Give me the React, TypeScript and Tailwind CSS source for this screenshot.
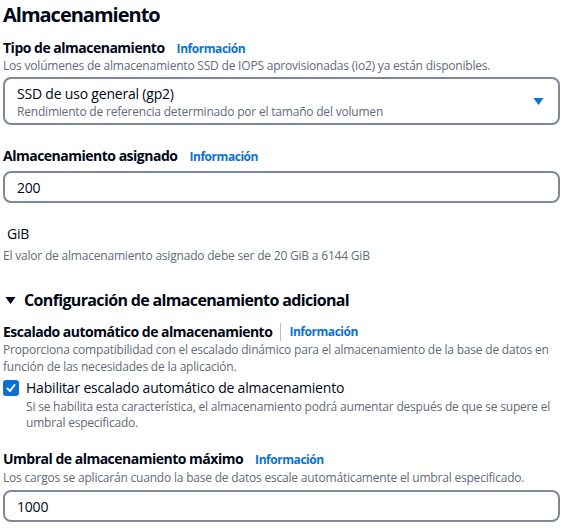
import React from 'react';

const font = { fontFamily: '"Open Sans", "Noto Sans", sans-serif' };

function Info() {
  return <span className="text-[12px] font-bold text-[#0972d3] ml-[12px] tracking-[-0.45px]">Información</span>;
}

export default function App() {
  return (
    <div className="w-[577px] h-[532px] bg-white text-[#000716] px-[3px] overflow-hidden tracking-[-0.2px]" style={font}>
      <h1 className="text-[20px] font-bold leading-[28px] mt-[1px] tracking-[-1px]">Almacenamiento</h1>

      {/* Tipo de almacenamiento */}
      <div className="mt-[10px]">
        <div className="flex items-baseline leading-[18px]">
          <span className="text-[14px] font-bold tracking-[-0.5px]">Tipo de almacenamiento</span>
          <Info />
        </div>
        <p className="text-[12px] leading-[16px] text-[#5f6b7a]">
          Los volúmenes de almacenamiento SSD de IOPS aprovisionadas (io2) ya están disponibles.
        </p>
        <div className="mt-[3px] w-[557px] h-[48px] border-2 border-[#7d8998] rounded-[8px] flex items-center justify-between pl-[12px] pr-[14px]">
          <div className="flex flex-col pt-[3px]">
            <span className="text-[14px] leading-[18px]">SSD de uso general (gp2)</span>
            <span className="text-[12px] leading-[17px] text-[#5f6b7a]">
              Rendimiento de referencia determinado por el tamaño del volumen
            </span>
          </div>
          <svg width="11" height="9" viewBox="0 0 11 9">
            <path d="M0.5 1 L10.5 1 L5.5 8 Z" fill="#0972d3" />
          </svg>
        </div>
      </div>

      {/* Almacenamiento asignado */}
      <div className="mt-[22px]">
        <div className="flex items-baseline leading-[18px]">
          <span className="text-[14px] font-bold tracking-[-0.5px]">Almacenamiento asignado</span>
          <Info />
        </div>
        <div className="mt-[5px] w-[557px] h-[32px] border-2 border-[#7d8998] rounded-[8px] flex items-center pl-[12px]">
          <span className="text-[14px]">200</span>
        </div>
        <div className="mt-[22px] pl-[4px] text-[14px] leading-[18px]">GiB</div>
        <p className="mt-[5px] text-[12px] leading-[16px] text-[#5f6b7a]">
          El valor de almacenamiento asignado debe ser de 20 GiB a 6144 GiB
        </p>
      </div>

      {/* Configuración adicional */}
      <div className="mt-[25px] flex items-center gap-[8px]">
        <svg width="11" height="9" viewBox="0 0 11 9" className="ml-[2px]">
          <path d="M0.5 1 L10.5 1 L5.5 8 Z" fill="#000716" />
        </svg>
        <span className="text-[16px] font-bold leading-[22px] tracking-[-0.65px]">Configuración de almacenamiento adicional</span>
      </div>

      <div className="mt-[12px]">
        <div className="flex items-center leading-[18px]">
          <span className="text-[14px] font-bold tracking-[-0.5px]">Escalado automático de almacenamiento</span>
          <span className="ml-[8px] w-px h-[18px] bg-[#b6bec9]" />
          <span className="text-[12px] font-bold text-[#0972d3] ml-[8px] tracking-[-0.45px]">Información</span>
        </div>
        <p className="text-[12px] leading-[17px] text-[#5f6b7a] pr-[10px]">
          Proporciona compatibilidad con el escalado dinámico para el almacenamiento de la base de datos en función de las necesidades de la aplicación.
        </p>
        <div className="mt-[4px] flex items-start">
          <div className="w-[16px] h-[16px] rounded-[3px] bg-[#0972d3] flex items-center justify-center mt-[1px] shrink-0">
            <svg width="12" height="12" viewBox="0 0 12 12">
              <path d="M2.5 6.5 L5 9 L9.5 3" stroke="white" strokeWidth="2" fill="none" strokeLinecap="round" strokeLinejoin="round" />
            </svg>
          </div>
          <div className="ml-[7px]">
            <div className="text-[14px] leading-[18px]">Habilitar escalado automático de almacenamiento</div>
            <p className="mt-[2px] text-[12px] leading-[16px] text-[#5f6b7a] pr-[10px]">
              Si se habilita esta característica, el almacenamiento podrá aumentar después de que se supere el umbral especificado.
            </p>
          </div>
        </div>
      </div>

      {/* Umbral */}
      <div className="mt-[19px]">
        <div className="flex items-baseline leading-[18px]">
          <span className="text-[14px] font-bold tracking-[-0.5px]">Umbral de almacenamiento máximo</span>
          <Info />
        </div>
        <p className="mt-[1px] text-[12px] leading-[16px] text-[#5f6b7a]">
          Los cargos se aplicarán cuando la base de datos escale automáticamente el umbral especificado.
        </p>
        <div className="mt-[4px] w-[557px] h-[32px] border-2 border-[#7d8998] rounded-[8px] flex items-center pl-[12px]">
          <span className="text-[14px]">1000</span>
        </div>
      </div>
    </div>
  );
}
